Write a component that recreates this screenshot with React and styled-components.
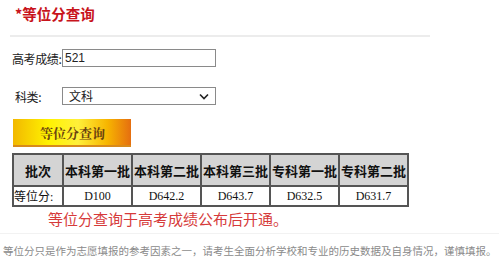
import React from "react";
import styled, { createGlobalStyle } from "styled-components";

const Global = createGlobalStyle`
body{margin:0;background:#fff;font-family:"Noto Sans CJK SC","Liberation Sans",sans-serif;}
`
const Page = styled.div`
width:499px;
height:277px;
overflow:hidden;
position:relative;
`
const Title = styled.h2`
margin:0;
padding:4px 0 0 15px;
font-size:14.5px;
font-weight:700;
color:#c8141c;
line-height:20px;
`
const Rule = styled.div`
margin:11px 0 0 10px;
width:420px;
height:2px;
background:#ececec;
`
const Form = styled.div`
padding:12px 0 0 12px;
display:flex;
flex-direction:column;
`
const Row = styled.div`
display:flex;
align-items:center;
height:18px;
margin-bottom:${p=>p.gap}px;
`
const Label = styled.span`
flex:0 0 ${p=>p.w}px;
min-width:0;
padding-left:${p=>p.pl||0}px;
box-sizing:border-box;
font-size:12px;
letter-spacing:-0.4px;
color:#222;
white-space:nowrap;
`
const Input = styled.div`
width:154px;
height:18px;
box-sizing:border-box;
border:1px solid #8a8a8a;
font-size:12px;
line-height:16px;
padding-left:2px;
color:#222;
font-family:"Liberation Sans",sans-serif;
`
const Select = styled(Input)`
display:flex;
justify-content:space-between;
align-items:center;
padding:0 6px 0 6px;
font-family:"Noto Sans CJK SC",sans-serif;
`
const Btn = styled.div`
margin-left:1px;
width:118px;
height:28px;
box-sizing:border-box;
background:linear-gradient(90deg,#f2b800 0%,#fff200 30%,#fff03a 55%,#f7b500 80%,#e56e10 100%);
border-bottom:2px solid #d88a1a;
display:flex;
align-items:center;
padding-left:27px;
font-family:"Noto Serif CJK SC","Noto Sans CJK SC",serif;
font-size:13px;
font-weight:700;
color:#6a4210;
`
const Table = styled.table`
margin:6px 0 0 12px;
border-collapse:collapse;
font-family:"Liberation Serif","Noto Sans CJK SC",serif;
`
const Th = styled.th`
background:#d4d4d4;
border:2px solid #555;
height:30px;
width:${p=>p.w}px;
padding:0;
font-size:13px;
font-weight:700;
color:#111;
white-space:nowrap;
`
const Td = styled.td`
border:2px solid #555;
height:15px;
padding:0;
text-align:${p=>p.left?"left":"center"};
font-size:12px;
color:#111;
background:#fff;
white-space:nowrap;
`
const Note = styled.div`
margin:1px 0 0 48px;
font-size:15px;
color:#d63a3a;
`
const Footer = styled.div`
position:absolute;
left:0;
right:0;
top:233px;
border-top:1px solid #f2f2f2;
padding:9px 0 0 3px;
font-size:10.5px;
color:#8a8a8a;
white-space:nowrap;
`

const cols = ["本科第一批","本科第二批","本科第三批","专科第一批","专科第二批"];
const vals = ["D100","D642.2","D643.7","D632.5","D631.7"];

const App = ()=>{
    return(
        <>
        <Global/>
        <Page>
            <Title>*等位分查询</Title>
            <Rule/>
            <Form>
                <Row gap={20}>
                    <Label w={50}>高考成绩:</Label>
                    <Input>521</Input>
                </Row>
                <Row gap={14}>
                    <Label w={50} pl={3}>科类:</Label>
                    <Select>
                        <span>文科</span>
                        <svg width="10" height="7" viewBox="0 0 10 7">
                            <path d="M1 1.5 L5 5.5 L9 1.5" fill="none" stroke="#222" strokeWidth="1.6"/>
                        </svg>
                    </Select>
                </Row>
                <Btn>等位分查询</Btn>
            </Form>
            <Table>
                <thead>
                    <tr>
                        <Th w={48}>批次</Th>
                        {cols.map(c=><Th key={c} w={67}>{c}</Th>)}
                    </tr>
                </thead>
                <tbody>
                    <tr>
                        <Td left>等位分:</Td>
                        {vals.map(v=><Td key={v}>{v}</Td>)}
                    </tr>
                </tbody>
            </Table>
            <Note>等位分查询于高考成绩公布后开通。</Note>
            <Footer>等位分只是作为志愿填报的参考因素之一，请考生全面分析学校和专业的历史数据及自身情况，谨慎填报。</Footer>
        </Page>
        </>
    )
}

export default App;
